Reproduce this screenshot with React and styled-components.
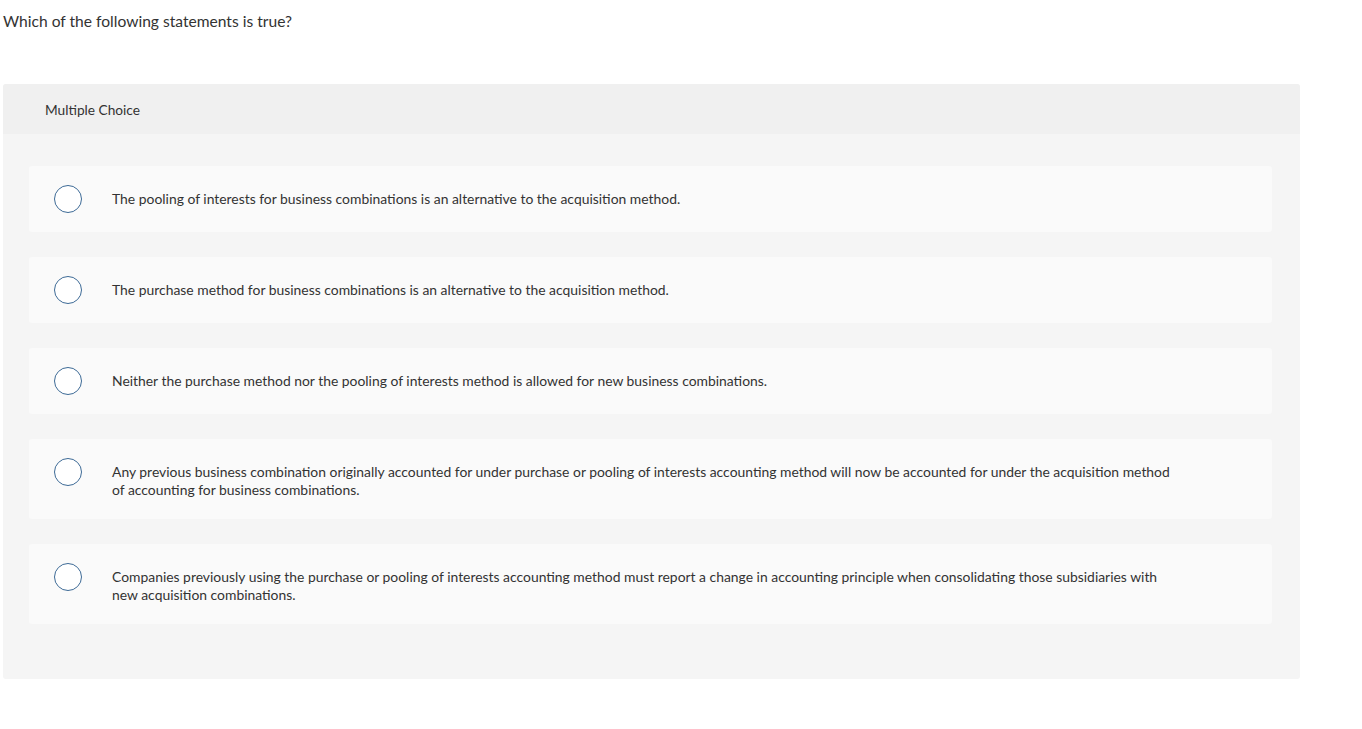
import React from 'react'
import styled, { createGlobalStyle } from 'styled-components'

const GlobalStyle = createGlobalStyle`
    body {
        margin: 0;
        background: #ffffff;
        font-family: "Lato", "Liberation Sans", sans-serif;
        color: #333333;
    }
`

const options = [
    'The pooling of interests for business combinations is an alternative to the acquisition method.',
    'The purchase method for business combinations is an alternative to the acquisition method.',
    'Neither the purchase method nor the pooling of interests method is allowed for new business combinations.',
    'Any previous business combination originally accounted for under purchase or pooling of interests accounting method will now be accounted for under the acquisition method of accounting for business combinations.',
    'Companies previously using the purchase or pooling of interests accounting method must report a change in accounting principle when consolidating those subsidiaries with new acquisition combinations.',
]

const App = () => {
    return (
        <Page>
            <GlobalStyle />
            <Question>Which of the following statements is true?</Question>
            <Panel>
                <PanelHeader>Multiple Choice</PanelHeader>
                <OptionList>
                    {options.map((text, i) => (
                        <Option key={i}>
                            <Radio />
                            <OptionText>{text}</OptionText>
                        </Option>
                    ))}
                </OptionList>
            </Panel>
        </Page>
    )
}

const Page = styled.div`
    padding: 12px 0 0 3px;
    width: 1297px;
`

const Question = styled.p`
    margin: 0;
    font-size: 15.6px;
    line-height: 18px;
    color: #333333;
`

const Panel = styled.section`
    margin-top: 54px;
    background: #f5f5f5;
    border-radius: 3px;
    overflow: hidden;
`

const PanelHeader = styled.div`
    height: 50px;
    display: flex;
    align-items: center;
    padding-left: 42px;
    background: #f0f0f0;
    font-size: 13.7px;
    color: #333333;
`

const OptionList = styled.div`
    display: flex;
    flex-direction: column;
    gap: 25px;
    padding: 32px 28px 55px 26px;
`

const Option = styled.div`
    display: flex;
    align-items: flex-start;
    gap: 30px;
    min-height: 66px;
    box-sizing: border-box;
    padding: 19px 90px 19px 25px;
    background: #fafafa;
    border-radius: 3px;
`

const Radio = styled.span`
    flex: none;
    width: 28px;
    height: 28px;
    box-sizing: border-box;
    border: 1.5px solid #3d6a96;
    border-radius: 50%;
    background: #ffffff;
`

const OptionText = styled.div`
    margin: 5px 0 1px;
    font-size: 13.9px;
    line-height: 18px;
    color: #333333;
`

export default App
